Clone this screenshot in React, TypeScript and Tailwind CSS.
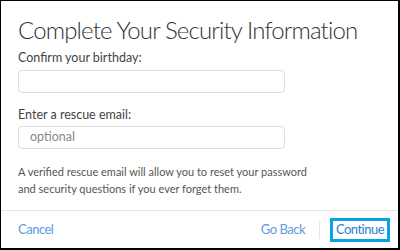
export default function App() {
  return (
    <div
      className="w-[400px] h-[250px] bg-white border-t border-l border-r-2 border-b-2 border-black flex flex-col overflow-hidden"
      style={{ fontFamily: 'Lato, "Open Sans", sans-serif' }}
    >
      <div className="flex-1 px-[17px] pt-[13px]">
        <h1 className="text-[24px] leading-[32px] font-light text-[#333] whitespace-nowrap tracking-[-0.85px]">
          Complete Your Security Information
        </h1>
        <label className="block mt-[4px] text-[12.5px] leading-[16px] text-[#444]">
          Confirm your birthday:
        </label>
        <div className="mt-[4px] w-[267px] h-[23px] rounded-[4px] border border-[#dedede]" />
        <label className="block mt-[14px] text-[12.5px] leading-[16px] text-[#444]">
          Enter a rescue email:
        </label>
        <div className="mt-[3px] w-[267px] h-[23px] rounded-[4px] border border-[#dedede] flex items-center px-[11px] text-[12.5px] text-[#888]">
          optional
        </div>
        <p className="mt-[14px] text-[11px] leading-[17px] text-[#555]">
          A verified rescue email will allow you to reset your password
          <br />
          and security questions if you ever forget them.
        </p>
      </div>
      <div className="h-[38px] border-t border-[#e5e5e5] flex items-center pl-[17px] pr-[8px]">
        <span className="text-[13px] tracking-[-0.5px] text-[#5b9ae0]">Cancel</span>
        <span className="ml-auto text-[13px] tracking-[-0.5px] text-[#5b9ae0]">Go Back</span>
        <div className="ml-[14px] mr-[10px] w-px h-[18px] bg-[#e5e5e5]" />
        <div className="w-[60px] h-[24px] border-[3px] border-[#0aa2e6] flex items-center justify-center text-[13px] tracking-[-0.5px] text-[#2a7fd4]">
          Continue
        </div>
      </div>
    </div>
  );
}
